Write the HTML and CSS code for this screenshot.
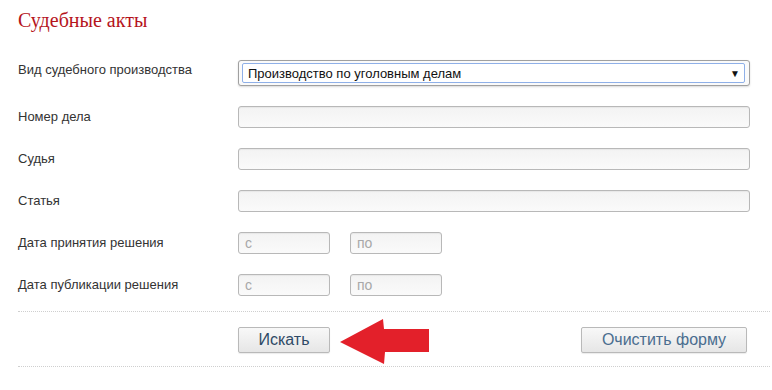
FILE: index.html
```html
<!DOCTYPE html>
<html lang="ru">
<head>
<meta charset="utf-8">
<link rel="stylesheet" href="styles.css">
</head>
<body>
<div class="page">
  <h1 class="title">Судебные акты</h1>
  <div class="form">
    <div class="row row-select">
      <div class="label">Вид судебного производства</div>
      <div class="select">
        <div class="select-inner">
          <span class="select-text">Производство по уголовным делам</span>
          <span class="select-arrow">▼</span>
        </div>
      </div>
    </div>
    <div class="row">
      <div class="label">Номер дела</div>
      <div class="input wide"></div>
    </div>
    <div class="row">
      <div class="label">Судья</div>
      <div class="input wide"></div>
    </div>
    <div class="row">
      <div class="label">Статья</div>
      <div class="input wide"></div>
    </div>
    <div class="row">
      <div class="label">Дата принятия решения</div>
      <div class="dates">
        <div class="input date"><span class="ph">с</span></div>
        <div class="input date"><span class="ph">по</span></div>
      </div>
    </div>
    <div class="row">
      <div class="label">Дата публикации решения</div>
      <div class="dates">
        <div class="input date"><span class="ph">с</span></div>
        <div class="input date"><span class="ph">по</span></div>
      </div>
    </div>
  </div>
  <div class="actions">
    <div class="actions-inner">
      <button class="btn btn-search">Искать</button>
      <button class="btn btn-clear">Очистить форму</button>
      <svg class="pointer" width="92" height="46" viewBox="0 0 92 46">
        <polygon points="0,23 43,0 44,10 89,10 89,33 45,33 44,45" fill="#e3202a"/>
      </svg>
    </div>
  </div>
</div>
</body>
</html>
```
FILE: styles.css
```css
html, body {
  margin: 0;
  padding: 0;
  background: #ffffff;
}
.page {
  padding: 0 2px 0 18px;
  font-family: Arial, "Liberation Sans", sans-serif;
  color: #333333;
}
.title {
  margin: 0;
  padding-top: 8px;
  height: 60px;
  box-sizing: border-box;
  font-family: Georgia, "Liberation Serif", serif;
  font-weight: normal;
  font-size: 20px;
  line-height: 24px;
  color: #b5141c;
}
.form {
  display: flex;
  flex-direction: column;
  gap: 20px;
  padding-bottom: 15px;
  border-bottom: 1px dotted #cfcfcf;
}
.row {
  display: grid;
  grid-template-columns: 220px 512px;
  align-items: start;
  height: 22px;
}
.row-select {
  height: 26px;
}
.label {
  font-size: 13px;
  line-height: 18px;
  padding-top: 2px;
}
.row-select .label {
  padding-top: 1px;
}
.select {
  height: 26px;
  box-sizing: border-box;
  border: 1px solid #a0a0a0;
  border-radius: 3px;
  background: #fafafa;
  box-shadow: 0 1px 2px rgba(0,0,0,0.15);
  padding: 2px 4px 2px 3px;
}
.select-inner {
  height: 20px;
  box-sizing: border-box;
  border: 1px solid #8fb0e8;
  border-radius: 2px;
  background: #ffffff;
  display: flex;
  align-items: center;
  justify-content: space-between;
  padding: 0 4px 0 5px;
}
.select-text {
  font-size: 13px;
  color: #111111;
}
.select-arrow {
  font-size: 10px;
  color: #111111;
}
.input {
  height: 22px;
  box-sizing: border-box;
  border: 1px solid #b8b8b8;
  border-radius: 3px;
  background: linear-gradient(#f3f3f3, #fafafa);
  box-shadow: inset 0 1px 1px rgba(0,0,0,0.05);
}
.dates {
  display: flex;
  gap: 20px;
}
.date {
  width: 92px;
  padding-left: 6px;
  display: flex;
  align-items: center;
}
.ph {
  font-size: 14px;
  color: #a8a8a8;
}
.actions {
  padding: 15px 0 13px;
  border-bottom: 1px dotted #cfcfcf;
}
.actions-inner {
  position: relative;
  display: flex;
  justify-content: space-between;
  margin-left: 220px;
  width: 509px;
}
.btn {
  height: 26px;
  box-sizing: border-box;
  border: 1px solid #b9b9b9;
  border-radius: 2px;
  background: linear-gradient(#f8f8f8, #e6e6e6);
  font-family: Arial, "Liberation Sans", sans-serif;
  font-size: 16px;
  padding: 0;
  box-shadow: 0 1px 1px rgba(0,0,0,0.08);
}
.btn-search {
  width: 92px;
  color: #2e4a66;
}
.btn-clear {
  width: 166px;
  color: #4a6d8f;
}
.pointer {
  position: absolute;
  left: 102px;
  top: -8px;
}
```
